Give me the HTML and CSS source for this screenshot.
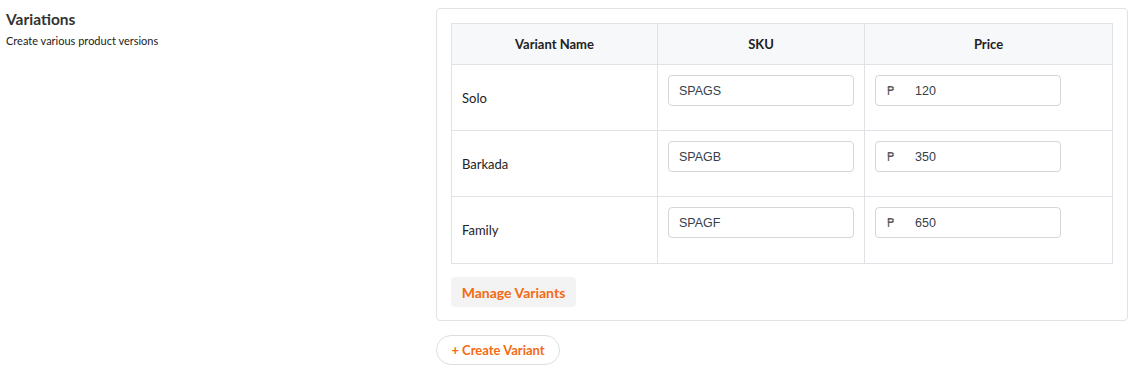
FILE: index.html
```html
<!DOCTYPE html>
<html lang="en">
<head>
<meta charset="utf-8">
<title>Variations</title>
<link rel="stylesheet" href="styles.css">
</head>
<body>
<div class="page">
  <div class="intro">
    <h2 class="title">Variations</h2>
    <p class="subtitle">Create various product versions</p>
  </div>
  <div class="main">
    <div class="card">
      <table class="variants">
        <colgroup>
          <col class="c-name">
          <col class="c-sku">
          <col class="c-price">
        </colgroup>
        <thead>
          <tr><th>Variant Name</th><th>SKU</th><th>Price</th></tr>
        </thead>
        <tbody>
          <tr>
            <td class="name">Solo</td>
            <td class="field"><div class="input">SPAGS</div></td>
            <td class="field"><div class="input price"><span class="peso">₱</span><span class="amount">120</span></div></td>
          </tr>
          <tr>
            <td class="name">Barkada</td>
            <td class="field"><div class="input">SPAGB</div></td>
            <td class="field"><div class="input price"><span class="peso">₱</span><span class="amount">350</span></div></td>
          </tr>
          <tr>
            <td class="name">Family</td>
            <td class="field"><div class="input">SPAGF</div></td>
            <td class="field"><div class="input price"><span class="peso">₱</span><span class="amount">650</span></div></td>
          </tr>
        </tbody>
      </table>
      <button class="btn-manage">Manage Variants</button>
    </div>
    <button class="btn-create">+ Create Variant</button>
  </div>
</div>
</body>
</html>
```

FILE: styles.css
```css
* { box-sizing: border-box; }
html, body { margin: 0; padding: 0; background: #fff; }
body { font-family: Lato, "Noto Sans", sans-serif; color: #222; }

.page {
  display: grid;
  grid-template-columns: 430px 692px;
  padding: 8px 0 0 6px;
}

.title {
  margin: 0;
  font-size: 15.5px;
  line-height: 22px;
  font-weight: 700;
  color: #333;
}
.subtitle {
  margin: 3px 0 0;
  font-size: 11px;
  line-height: 16px;
  color: #222;
}

.card {
  border: 1px solid #e2e2e2;
  border-radius: 4px;
  padding: 14px 14px 13px;
}

.variants {
  width: 100%;
  border-collapse: collapse;
  table-layout: fixed;
}
.c-name { width: 206px; }
.c-sku { width: 207px; }

.variants th,
.variants td {
  border: 1px solid #dfe2e6;
}
.variants th {
  background: #f7f8fa;
  height: 41px;
  font-size: 13px;
  font-weight: 700;
  color: #222;
  text-align: center;
  padding: 0;
}
.variants td {
  height: 66px;
  padding: 10px;
  font-size: 13px;
}
.variants tbody tr:last-child td { height: 67px; }
.variants td.name {
  vertical-align: middle;
  color: #222;
}
.variants td.field {
  vertical-align: top;
}

.input {
  width: 186px;
  height: 31px;
  border: 1px solid #d3d6da;
  border-radius: 4px;
  padding: 0 10px;
  display: flex;
  align-items: center;
  font-family: "Liberation Sans", Arial, sans-serif;
  font-size: 12.5px;
  color: #36404a;
}
.input.price { padding: 0 0 0 11px; }
.peso {
  font-family: "DejaVu Sans", sans-serif;
  font-size: 12px;
  color: #555;
  width: 28px;
}
.amount { color: #36404a; }

button {
  font-family: Lato, "Noto Sans", sans-serif;
  font-weight: 700;
  font-size: 13px;
  color: #f56a12;
  cursor: pointer;
}
.btn-manage {
  display: block;
  margin-top: 13px;
  height: 30px;
  width: 125px;
  border: 0;
  border-radius: 4px;
  background: #f3f3f3;
  padding: 0;
  font-size: 14px;
}
.btn-create {
  display: block;
  margin-top: 14px;
  height: 30px;
  width: 124px;
  border: 1px solid #dedede;
  border-radius: 15px;
  background: #fff;
  padding: 0;
}
```
